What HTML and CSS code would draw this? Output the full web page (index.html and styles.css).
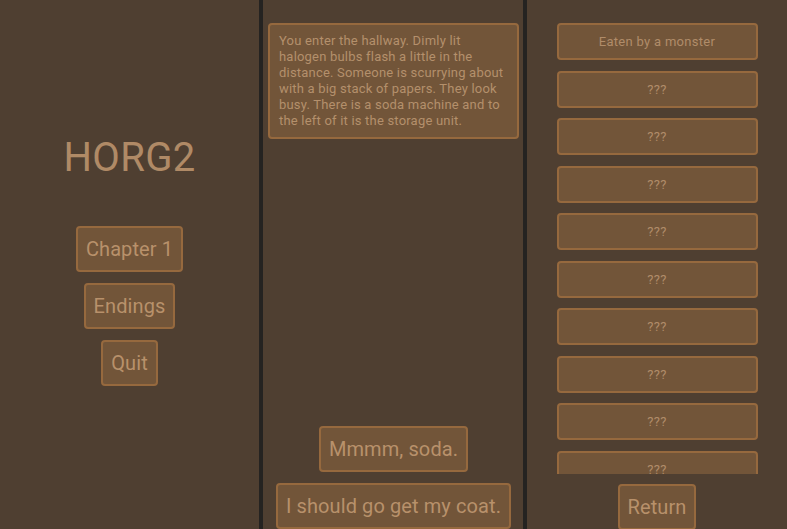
FILE: index.html
```html
<!DOCTYPE html>
<html>
<head>
<meta charset="utf-8">
<link rel="stylesheet" href="styles.css">
</head>
<body>
<div class="panel menu">
  <h1 class="title">HORG2</h1>
  <button class="btn">Chapter 1</button>
  <button class="btn">Endings</button>
  <button class="btn">Quit</button>
</div>
<div class="panel story">
  <div class="story-text">You enter the hallway. Dimly lit halogen bulbs flash a little in the distance. Someone is scurrying about with a big stack of papers. They look busy. There is a soda machine and to the left of it is the storage unit.</div>
  <div class="choices">
    <button class="btn">Mmmm, soda.</button>
    <button class="btn">I should go get my coat.</button>
  </div>
</div>
<div class="panel endings">
  <div class="ending-list">
    <div class="ending">Eaten by a monster</div>
    <div class="ending">???</div>
    <div class="ending">???</div>
    <div class="ending">???</div>
    <div class="ending">???</div>
    <div class="ending">???</div>
    <div class="ending">???</div>
    <div class="ending">???</div>
    <div class="ending">???</div>
    <div class="ending">???</div>
    <div class="ending">???</div>
  </div>
  <button class="btn">Return</button>
</div>
</body>
</html>
```
FILE: styles.css
```css
html, body {
  margin: 0;
  padding: 0;
  height: 100%;
}
body {
  display: grid;
  grid-template-columns: 259px 260px 260px;
  gap: 4px;
  background: #252321;
  font-family: Roboto, "Noto Sans", sans-serif;
  color: #b8916b;
  overflow: hidden;
}
.panel {
  box-sizing: border-box;
  background: #4f3f31;
  min-width: 0;
  min-height: 0;
  display: flex;
  flex-direction: column;
  align-items: center;
}
.btn {
  font-family: inherit;
  font-size: 20px;
  line-height: 26px;
  letter-spacing: 0.1px;
  color: #b8916b;
  background: #725539;
  border: 2px solid #96693e;
  border-radius: 4px;
  padding: 8px 8px;
  margin: 0;
  cursor: pointer;
}
.menu {
  justify-content: center;
  gap: 11px;
  padding-bottom: 10px;
}
.title {
  font-weight: 400;
  font-size: 40px;
  line-height: 48px;
  letter-spacing: 0.3px;
  margin: 0 0 33px;
  color: #b08a66;
}
.story {
  padding: 23px 4px 0 5px;
}
.story-text {
  align-self: stretch;
  background: #725539;
  border: 2px solid #96693e;
  border-radius: 4px;
  padding: 8px 6px 8px 9px;
  font-size: 13px;
  line-height: 16px;
  letter-spacing: 0.2px;
  color: #b4906c;
}
.choices {
  margin-top: auto;
  display: flex;
  flex-direction: column;
  align-items: center;
  gap: 11px;
}
.ending-list {
  height: 451px;
  padding-top: 23px;
  overflow: hidden;
  display: flex;
  flex-direction: column;
  align-items: center;
  gap: 10.5px;
  flex: none;
}
.ending {
  flex: none;
  width: 197px;
  height: 33px;
  line-height: 33px;
  text-align: center;
  font-size: 13px;
  letter-spacing: 0.3px;
  color: #b08c69;
  background: #725539;
  border: 2px solid #96693e;
  border-radius: 4px;
}
.endings .btn {
  margin-top: 10px;
}
```
